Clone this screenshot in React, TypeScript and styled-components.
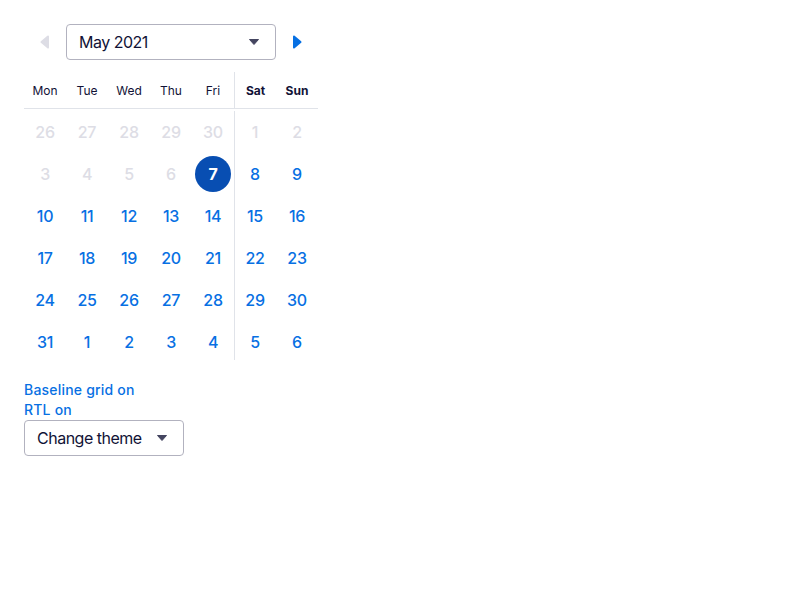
import React from "react";
import styled, { createGlobalStyle } from "styled-components";

const Global = createGlobalStyle`
  body { margin: 0; background: #fff; font-family: Inter, "Noto Sans", sans-serif; color: #111236; }
`;

const Page = styled.div`
  padding: 24px;
  display: flex;
  flex-direction: column;
  align-items: flex-start;
`;

const Nav = styled.div`
  display: grid;
  grid-template-columns: 42px 210px 42px;
  height: 36px;
  width: 294px;
`;

const ArrowButton = styled.button<{ $disabled?: boolean }>`
  border: 0;
  background: none;
  padding: 0;
  display: flex;
  align-items: center;
  justify-content: center;
  color: ${(p) => (p.$disabled ? "#dddde5" : "#0770e3")};
  cursor: pointer;
`;

const Select = styled.div<{ $width: number }>`
  box-sizing: border-box;
  width: ${(p) => p.$width}px;
  height: 36px;
  border: 1px solid #b2b2bf;
  border-radius: 4px;
  display: flex;
  align-items: center;
  justify-content: space-between;
  padding: 0 16px 0 12px;
  font-size: 16px;
  color: #111236;
  letter-spacing: -0.5px;
`;

const Calendar = styled.div`
  margin-top: 12px;
  width: 294px;
`;

const Row = styled.div<{ $head?: boolean }>`
  display: grid;
  grid-template-columns: repeat(7, 42px);
  height: ${(p) => (p.$head ? "36px" : "42px")};
  border-bottom: ${(p) => (p.$head ? "1px solid #e0e3e9" : "0")};
  margin-bottom: ${(p) => (p.$head ? "2px" : "0")};
`;

const HeadCell = styled.div<{ $weekend?: boolean; $split?: boolean }>`
  box-sizing: border-box;
  display: flex;
  align-items: center;
  justify-content: center;
  font-size: 12px;
  font-weight: ${(p) => (p.$weekend ? 700 : 400)};
  color: #111236;
  border-left: ${(p) => (p.$split ? "1px solid #e0e3e9" : "0")};
`;

const DayCell = styled.div<{ $split?: boolean; $last?: boolean }>`
  box-sizing: border-box;
  display: flex;
  align-items: center;
  justify-content: center;
  position: relative;
  &::before {
    content: "";
    display: ${(p) => (p.$split ? "block" : "none")};
    position: absolute;
    left: 0;
    top: 0;
    bottom: ${(p) => (p.$last ? "3px" : "0")};
    width: 1px;
    background: #e0e3e9;
  }
`;

const Day = styled.span<{ $state: "out" | "in" | "sel" }>`
  width: 36px;
  height: 36px;
  border-radius: 50%;
  display: flex;
  align-items: center;
  justify-content: center;
  font-size: 16px;
  font-weight: ${(p) => (p.$state === "sel" ? 700 : 500)};
  letter-spacing: -0.3px;
  color: ${(p) => (p.$state === "out" ? "#dddde5" : p.$state === "sel" ? "#fff" : "#0770e3")};
  background: ${(p) => (p.$state === "sel" ? "#084eb2" : "transparent")};
`;

const Links = styled.div`
  margin-top: 17px;
  display: flex;
  flex-direction: column;
`;

const Link = styled.span`
  font-size: 14px;
  font-weight: 500;
  line-height: 20px;
  letter-spacing: 0.2px;
  color: #0770e3;
`;

const Caret = () => (
  <svg width="10" height="6" viewBox="0 0 10 6">
    <path d="M0.5 0.5 H9.5 L5 5.5 Z" fill="#444560" stroke="#444560" strokeLinejoin="round" />
  </svg>
);

const Arrow = ({ dir }: { dir: "left" | "right" }) => (
  <svg width="10" height="14" viewBox="0 0 10 14">
    <path
      d={dir === "right" ? "M2 1.5 L8.5 7 L2 12.5 Z" : "M8 1.5 L1.5 7 L8 12.5 Z"}
      fill="currentColor"
      stroke="currentColor"
      strokeWidth="2"
      strokeLinejoin="round"
    />
  </svg>
);

const days = ["Mon", "Tue", "Wed", "Thu", "Fri", "Sat", "Sun"];

type Cell = { n: number; s: "out" | "in" | "sel" };

const weeks: Cell[][] = (() => {
  const cells: Cell[] = [];
  [26, 27, 28, 29, 30].forEach((n) => cells.push({ n, s: "out" }));
  for (let n = 1; n <= 6; n++) cells.push({ n, s: "out" });
  cells.push({ n: 7, s: "sel" });
  for (let n = 8; n <= 31; n++) cells.push({ n, s: "in" });
  for (let n = 1; n <= 6; n++) cells.push({ n, s: "in" });
  const w: Cell[][] = [];
  for (let i = 0; i < 6; i++) w.push(cells.slice(i * 7, i * 7 + 7));
  return w;
})();

export default function App() {
  return (
    <Page>
      <Global />
      <Nav>
        <ArrowButton $disabled aria-label="Previous month">
          <Arrow dir="left" />
        </ArrowButton>
        <Select $width={210}>
          <span>May 2021</span>
          <Caret />
        </Select>
        <ArrowButton aria-label="Next month">
          <Arrow dir="right" />
        </ArrowButton>
      </Nav>
      <Calendar>
        <Row $head>
          {days.map((d, i) => (
            <HeadCell key={d} $weekend={i >= 5} $split={i === 5}>
              {d}
            </HeadCell>
          ))}
        </Row>
        {weeks.map((w, wi) => (
          <Row key={wi}>
            {w.map((c, ci) => (
              <DayCell key={ci} $split={ci === 5} $last={wi === weeks.length - 1}>
                <Day $state={c.s}>{c.n}</Day>
              </DayCell>
            ))}
          </Row>
        ))}
      </Calendar>
      <Links>
        <Link>Baseline grid on</Link>
        <Link>RTL on</Link>
      </Links>
      <Select $width={160}>
        <span>Change theme</span>
        <Caret />
      </Select>
    </Page>
  );
}
